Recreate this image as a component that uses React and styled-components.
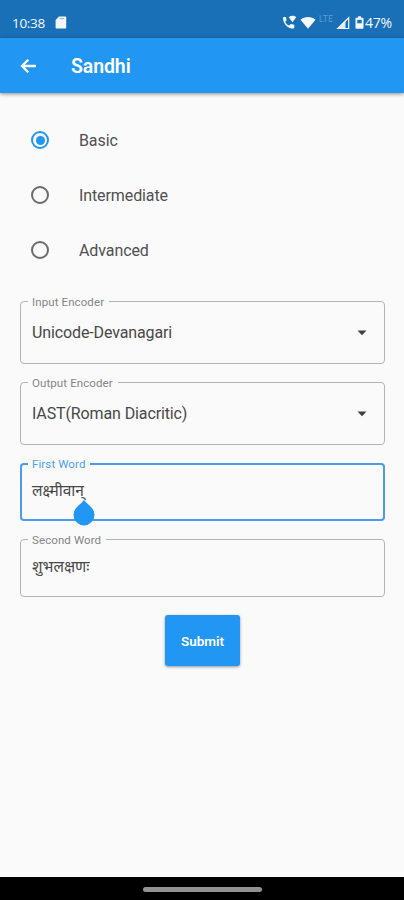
import { useState } from 'react';
import styled, { createGlobalStyle } from 'styled-components';

const GlobalStyle = createGlobalStyle`
  * {
    box-sizing: border-box;
  }

  body {
    margin: 0;
    background: #fafafa;
    font-family: Roboto, 'Noto Sans', sans-serif;
  }
`;

const Margin = styled.span`
  width: ${(props) => props.$size}px;
`;

const Screen = styled.div`
  display: flex;
  flex-direction: column;
  height: 900px;
  overflow: hidden;
  background: #fafafa;
`;

const StatusBar = styled.div`
  display: flex;
  align-items: center;
  height: 38px;
  padding: 7px 11px 0 12px;
  background: #1a70b7;
  color: #f4f8fc;
`;

const Clock = styled.span`
  width: 43px;
  font-family: 'Open Sans', sans-serif;
  font-size: 13.5px;
  font-weight: 500;
  letter-spacing: -0.3px;
`;

const StatusIcons = styled.div`
  display: flex;
  align-items: center;
  margin-left: auto;
`;

const Network = styled.span`
  width: 16px;
  margin: -7px 1px 0 3px;
  color: #5e9bd0;
  font-size: 8.5px;
  letter-spacing: 0.4px;
`;

const Battery = styled.span`
  width: 28px;
  margin-left: 1px;
  font-family: 'Open Sans', sans-serif;
  font-size: 14px;
  font-weight: 500;
  letter-spacing: -0.2px;
`;

const AppBar = styled.header`
  display: flex;
  align-items: center;
  height: 55px;
  flex-shrink: 0;
  padding-left: 20px;
  background: #2196f3;
  color: #fff;
  box-shadow: 0 1px 4px rgba(0, 0, 0, 0.45);
`;

const Title = styled.h1`
  margin: 2px 0 0 35px;
  font-size: 19.5px;
  font-weight: 600;
  letter-spacing: -0.1px;
`;

const Content = styled.main`
  display: flex;
  flex: 1;
  flex-direction: column;
  padding: 20px 19px 0 20px;
`;

const RadioRow = styled.div`
  display: flex;
  align-items: center;
  height: 55px;
  padding-left: 11px;
  color: #505050;
  font-size: 16px;
  letter-spacing: -0.1px;
`;

const RadioCircle = styled.span`
  display: flex;
  align-items: center;
  justify-content: center;
  width: 18px;
  height: 18px;
  margin: 0 30px 1px 0;
  border: 2px solid ${(props) => (props.$checked ? '#2196f3' : '#6b6b6b')};
  border-radius: 50%;

  &::after {
    content: '';
    width: 9px;
    height: 9px;
    border-radius: 50%;
    background: ${(props) => (props.$checked ? '#2196f3' : 'transparent')};
  }
`;

const Fields = styled.div`
  display: flex;
  flex-direction: column;
  gap: 18px;
  margin-top: 23px;
`;

const Field = styled.div`
  position: relative;
  display: flex;
  align-items: center;
  justify-content: space-between;
  height: ${(props) => props.$height}px;
  padding: 0 17px 0 ${(props) => (props.$focused ? 10 : 11)}px;
  border: ${(props) => (props.$focused ? '2px solid #4a9bea' : '1px solid #b4b4b4')};
  border-radius: 4px;
  color: #484848;
  font-size: 16px;
  letter-spacing: -0.12px;
`;

const Label = styled.span`
  position: absolute;
  top: ${(props) => (props.$focused ? -8 : -7)}px;
  left: ${(props) => (props.$focused ? 6 : 7)}px;
  padding: 0 5px 0 4px;
  background: #fafafa;
  color: ${(props) => (props.$focused ? '#4a9ff0' : '#858585')};
  font-size: 11.5px;
  line-height: 14px;
  letter-spacing: 0.1px;
`;

const Word = styled.span`
  position: relative;
  margin-bottom: ${(props) => props.$lift}px;
  font-family: 'Noto Sans', sans-serif;
  font-size: 15.5px;
  line-height: 22px;
  letter-spacing: 0;
`;

const Handle = styled.svg`
  position: absolute;
  top: 21px;
  right: -11px;
`;

const SubmitButton = styled.button`
  align-self: center;
  width: 75px;
  height: 51px;
  margin-top: 18px;
  padding: 0;
  border: 0;
  border-radius: 3px;
  background: #2196f3;
  color: #fff;
  font-family: Roboto, sans-serif;
  font-size: 13.5px;
  font-weight: 600;
  box-shadow: 0 1px 3px rgba(0, 0, 0, 0.4);
`;

const NavigationBar = styled.div`
  display: flex;
  align-items: center;
  justify-content: center;
  height: 23px;
  padding-top: 1px;
  background: #000;
`;

const HomeIndicator = styled.div`
  width: 119px;
  height: 5px;
  border-radius: 3px;
  background: #929292;
`;

const SdCardIcon = () => (
  <svg width="12" height="14" viewBox="0 0 12 14" fill="currentColor">
    <path d="M4 .5h6.2c.7 0 1 .4 1 1v10c0 .7-.3 1-1 1H1.600c-.7 0-1-.3-1-1V4.100z" />
    <path d="M4.500 2.600h4.800" stroke="#8ab5da" strokeWidth="1" />
  </svg>
);

const WifiCallIcon = () => (
  <svg width="15" height="15" viewBox="0 0 15 15" fill="currentColor">
    <path d="M1.500 2h2.300l.8 3.300L3.200 6.900c.9 1.700 2.200 2.900 4 3.700L8.800 9l3.500.8v2.700c0 .6-.4 1-1 1C5.600 13.500 1 8.500 1 2.900c0-.6.2-.9.500-.9z" />
    <path d="M6.800 2.300C9 .400 12 .400 14.200 2.300L10.500 7.200z" />
  </svg>
);

const WifiIcon = () => (
  <svg width="16" height="14" viewBox="0 0 16 14" fill="currentColor">
    <path d="M.5 3.800C4.700.100 11.300.100 15.500 3.800L8 12.800z" />
  </svg>
);

const SignalIcon = () => (
  <svg width="14" height="14" viewBox="0 0 14 14" fill="currentColor">
    <path d="M9.500 4.500V13H1z" opacity="0.9" />
    <path d="M12.700 1.700v10.800H1.700z" fill="none" stroke="currentColor" strokeWidth="1.200" />
  </svg>
);

const BatteryIcon = () => (
  <svg width="9" height="14" viewBox="0 0 9 14" fill="none">
    <path d="M3 .300h3v1.400h1.500c.6 0 1 .3 1 1v9.100c0 .6-.4 1-1 1h-6c-.6 0-1-.4-1-1V2.700c0-.7.4-1 1-1H3z" fill="currentColor" />
    <path d="M2.300 3.800h4.400v3.500H2.300z" fill="#1a70b7" />
  </svg>
);

const BackIcon = () => (
  <svg width="16" height="16" viewBox="0 0 16 16" fill="none" stroke="currentColor" strokeWidth="2.300">
    <path d="M16 8H2M8.300 1.800 2 8l6.300 6.200" />
  </svg>
);

const DropdownIcon = () => (
  <svg width="10" height="6" viewBox="0 0 10 6" fill="#404040">
    <path d="M.5.500h9L5 5.200z" />
  </svg>
);

const CursorHandle = () => (
  <Handle width="22" height="26" viewBox="0 0 22 26" fill="#2196f3">
    <path d="M11 0c2 3 5 4.800 7.400 7.500A10.500 10.500 0 1 1 3.600 7.500C6 4.800 9 3 11 0z" />
  </Handle>
);

const LEVELS = ['Basic', 'Intermediate', 'Advanced'];

const App = () => {
  const [level, setLevel] = useState('Basic');

  return (
    <>
      <GlobalStyle />
      <Screen>
        <StatusBar>
          <Clock>10:38</Clock>
          <SdCardIcon />
          <StatusIcons>
            <WifiCallIcon />
            <Margin $size={3} />
            <WifiIcon />
            <Network>LTE</Network>
            <SignalIcon />
            <Margin $size={5} />
            <BatteryIcon />
            <Battery>47%</Battery>
          </StatusIcons>
        </StatusBar>
        <AppBar>
          <BackIcon />
          <Title>Sandhi</Title>
        </AppBar>
        <Content>
          {LEVELS.map((name) => (
            <RadioRow key={name} onClick={() => setLevel(name)}>
              <RadioCircle $checked={level === name} />
              {name}
            </RadioRow>
          ))}
          <Fields>
            <Field $height={63}>
              <Label>Input Encoder</Label>
              Unicode-Devanagari
              <DropdownIcon />
            </Field>
            <Field $height={63}>
              <Label>Output Encoder</Label>
              IAST(Roman Diacritic)
              <DropdownIcon />
            </Field>
            <Field $height={58} $focused>
              <Label $focused>First Word</Label>
              <Word $lift={4}>
                लक्ष्मीवान्
                <CursorHandle />
              </Word>
            </Field>
            <Field $height={58}>
              <Label>Second Word</Label>
              <Word $lift={4}>शुभलक्षणः</Word>
            </Field>
          </Fields>
          <SubmitButton>Submit</SubmitButton>
        </Content>
        <NavigationBar>
          <HomeIndicator />
        </NavigationBar>
      </Screen>
    </>
  );
};

export default App;
